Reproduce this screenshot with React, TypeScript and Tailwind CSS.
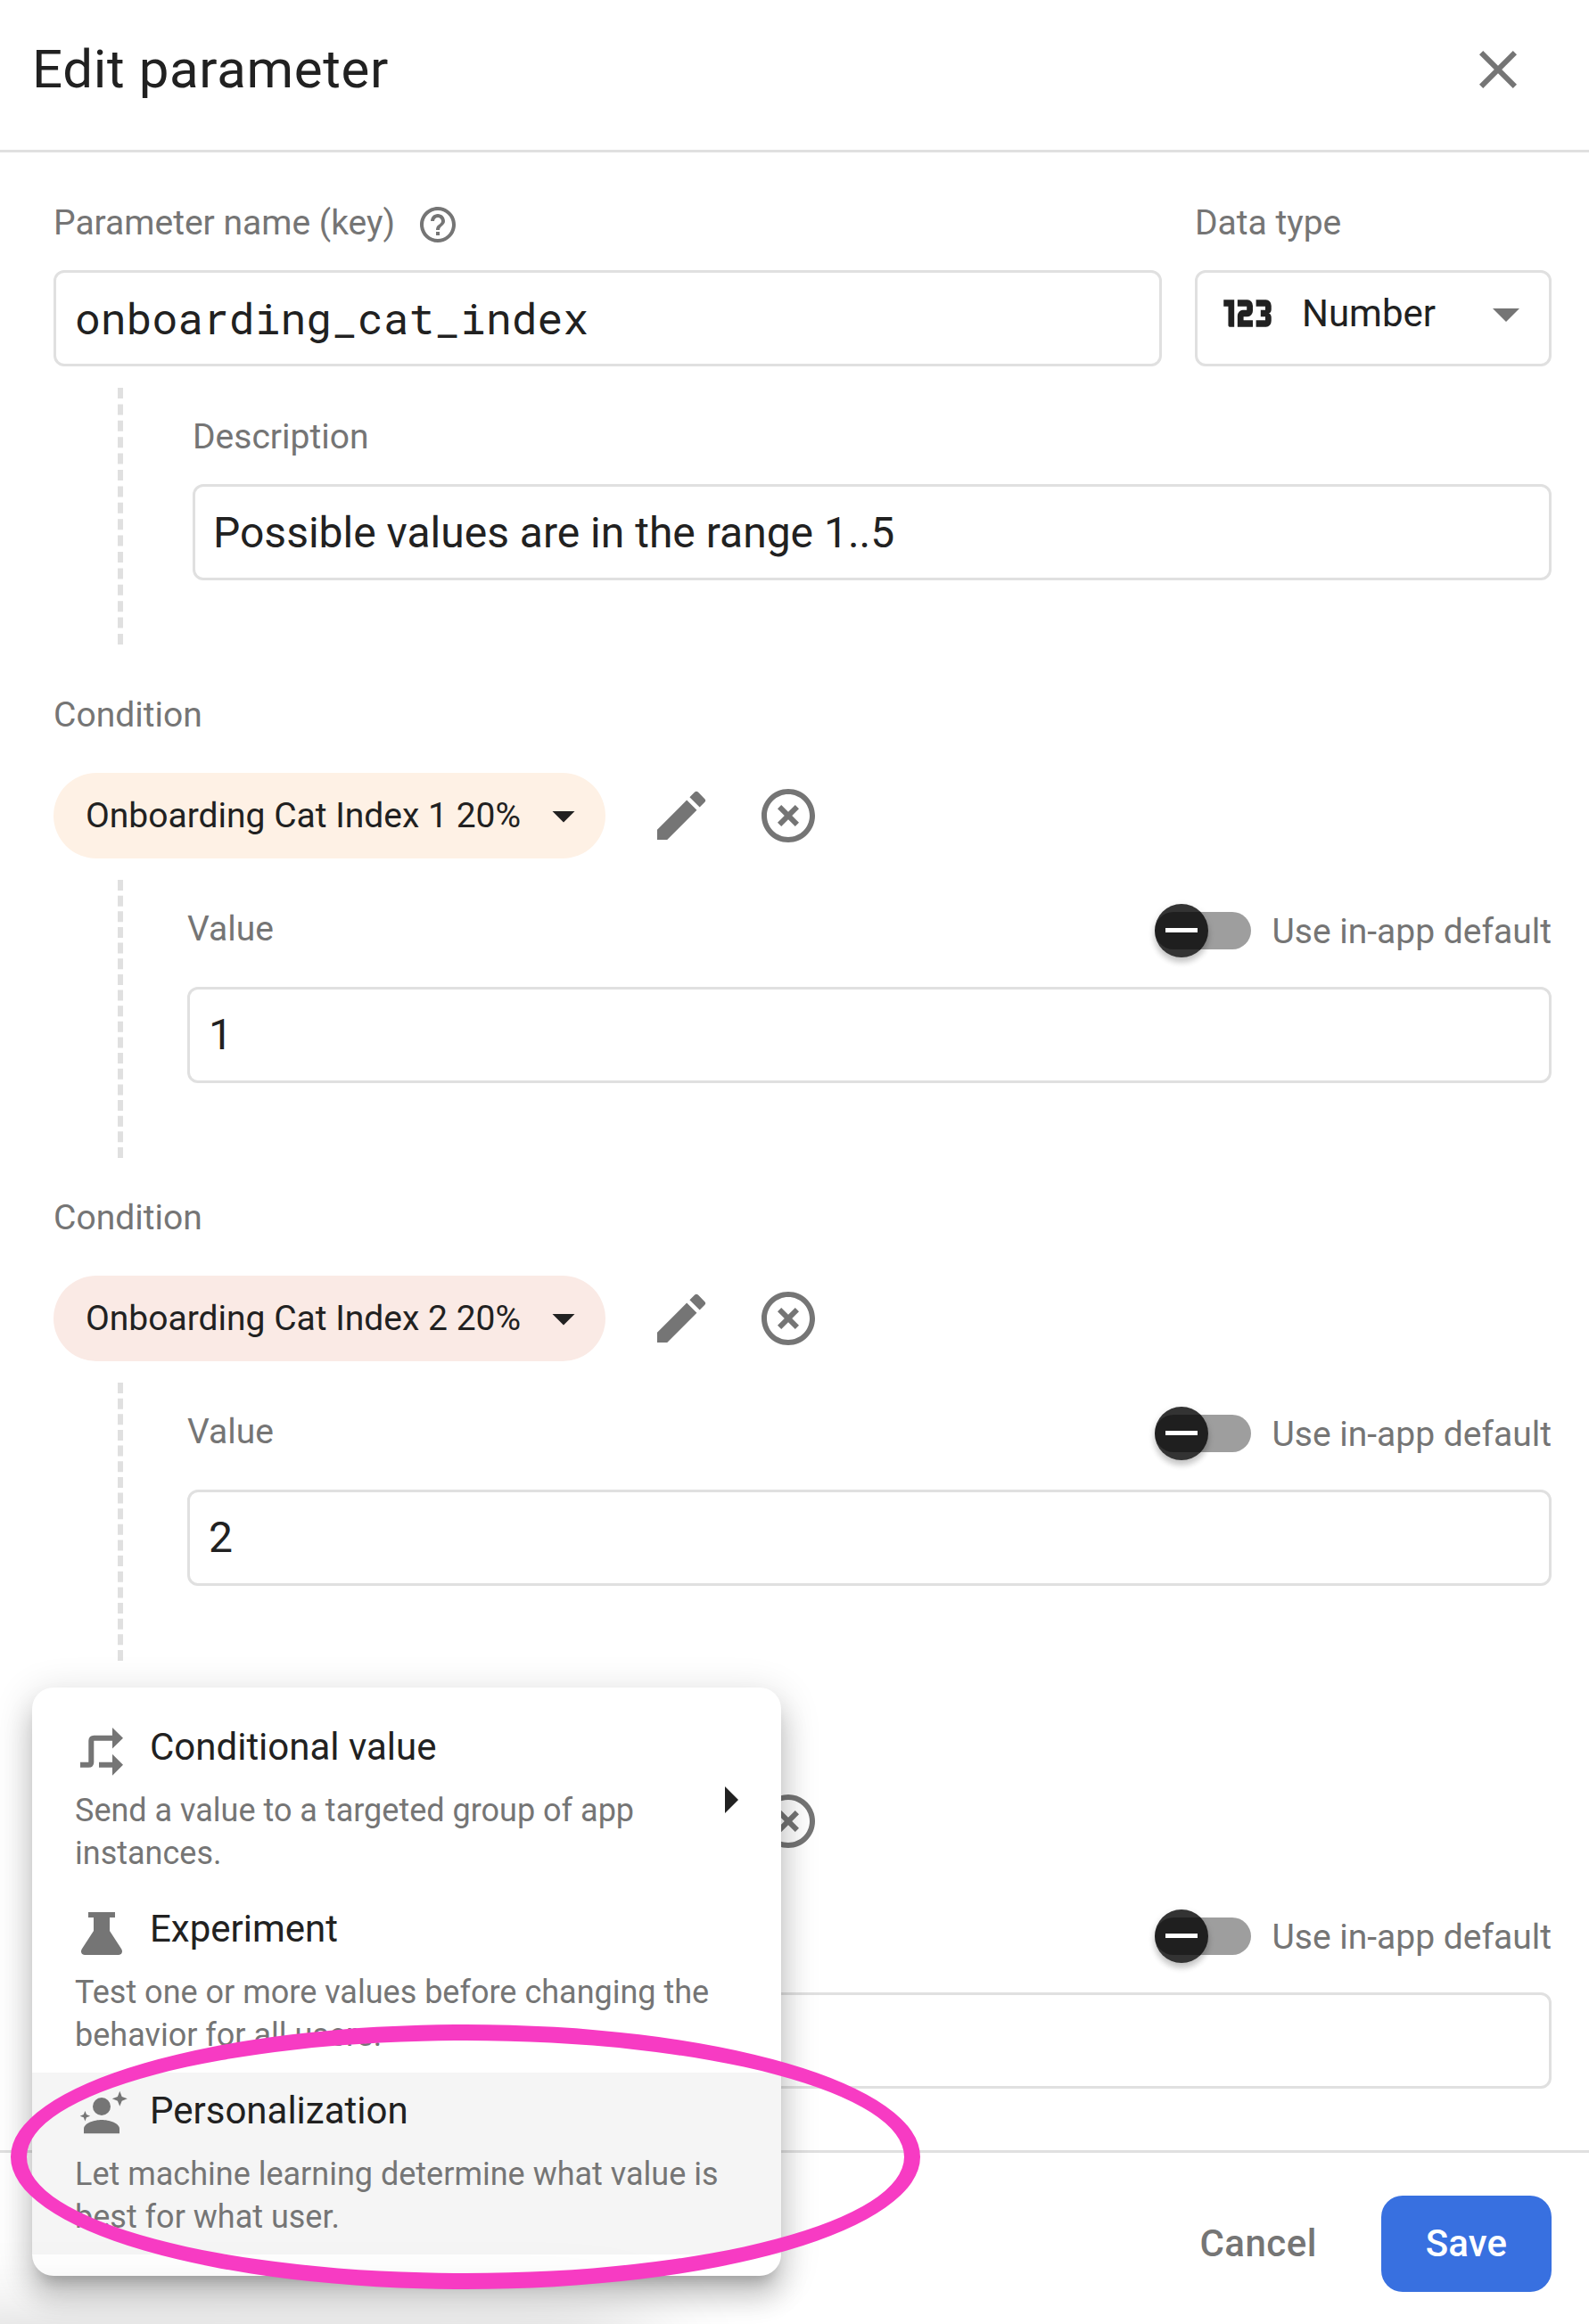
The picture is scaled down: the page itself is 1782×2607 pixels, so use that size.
import type { ReactNode } from "react";
import { MdArrowDropDown, MdArrowRight, MdClose, MdEdit, MdHelpOutline, MdHighlightOff } from "react-icons/md";

const fieldBox = "h-[108px] rounded-xl border-[3px] border-[#e0e0e0] bg-white";
const labelText = "pt-px text-[39px] leading-[60px] h-[60px] text-[#757575] whitespace-nowrap";

function NumericIcon() {
  return (
    <svg className="h-[31px] w-[54px]" viewBox="1.6 6.6 20.8 10.8" preserveAspectRatio="none" fill="#212121" stroke="#212121" strokeWidth="0.6">
      <path d="M4,17V9H2V7H6V17H4M22,15C22,16.11 21.1,17 20,17H16V15H20V13H18V11H20V9H16V7H20A2,2 0 0,1 22,9V10.5A1.5,1.5 0 0,1 20.5,12A1.5,1.5 0 0,1 22,13.5V15M14,15V17H8V13C8,11.89 8.9,11 10,11H12V9H8V7H12A2,2 0 0,1 14,9V11C14,12.11 13.1,13 12,13H10V15H14Z" />
    </svg>
  );
}

function BranchIcon() {
  return (
    <svg className="size-[60px] shrink-0" viewBox="0 0 60 60" fill="#757575">
      <path d="M6 44.7H15.3Q18.3 44.7 18.3 41.7V17.7Q18.3 14.7 21.3 14.7H43" fill="none" stroke="#757575" strokeWidth="6" />
      <path d="M42 3L54 14.7L42 26.4ZM27 41.7H42V32.7L54 44.7L42 56.7V47.7H27Z" />
    </svg>
  );
}

function FlaskIcon() {
  return (
    <svg className="size-[60px] shrink-0" viewBox="0 0 60 60" fill="#757575">
      <path d="M15 6H45V12H39V27L52.3 47.6C54 50.6 52.6 54 49 54H11C7.4 54 6 50.6 7.7 47.6L21 27V12H15Z" />
    </svg>
  );
}

function PersonSparkleIcon() {
  return (
    <svg className="size-[60px] shrink-0" viewBox="0 0 60 60" fill="#757575">
      <circle cx="30" cy="20" r="10" />
      <path d="M10 50.3V45C10 38.5 22 35 30 35S50 38.5 50 45V50.3Z" />
      <path d="M50.3 2.8L52.7 8.9L58.8 11.3L52.7 13.7L50.3 19.8L47.9 13.7L41.8 11.3L47.9 8.9Z" />
      <path d="M11.4 25L13 29.1L17.1 30.7L13 32.3L11.4 36.4L9.8 32.3L5.7 30.7L9.8 29.1Z" />
    </svg>
  );
}

function Toggle() {
  return (
    <div className="relative flex h-[60px] w-[108px] items-center">
      <div className="absolute left-0 top-0 size-[60px] rounded-full bg-[#333333] shadow-[0_6px_6px_rgba(0,0,0,0.14),0_3px_9px_rgba(0,0,0,0.14)]" />
      <div className="relative h-[42px] w-full rounded-full bg-black/38" />
      <div className="absolute left-3 top-[27px] h-[5px] w-9 bg-white" />
    </div>
  );
}

function Condition({ name, value, chip, covered }: { name?: string; value?: string; chip: string; covered?: boolean }) {
  return (
    <section className="mb-9">
      <div className={labelText}>{!covered && "Condition"}</div>
      <div className="mt-9 flex h-24 items-center">
        <div className={`flex h-24 w-[619px] items-center justify-between rounded-full pl-9 pr-[17px] ${chip}`}>
          <span className="whitespace-nowrap text-[39px] text-[#212121]">{name}</span>
          <MdArrowDropDown className="size-[60px] text-[#212121]" />
        </div>
        <MdEdit className="ml-[49px] size-[72px] text-[#757575]" />
        <MdHighlightOff className="ml-12 size-[72px] text-[#757575]" />
      </div>
      <div className="ml-[72px] mt-6 h-[312px] border-l-[6px] border-dashed border-[#e0e0e0] pl-[72px] pt-6">
        <div className="flex h-[60px] items-start justify-between">
          <span className={labelText}>{!covered && "Value"}</span>
          <div className="mt-[3px] flex items-center gap-6">
            <Toggle />
            <span className={labelText}>Use in-app default</span>
          </div>
        </div>
        <div className={`${fieldBox} mt-9 flex items-center pl-[21px] text-[48px] text-[#212121]`}>{value}</div>
      </div>
    </section>
  );
}

function MenuItem({ icon, title, text, active, arrow }: { icon: ReactNode; title: string; text: [string, string]; active?: boolean; arrow?: boolean }) {
  return (
    <div className={`flex h-[204px] items-center justify-between pl-12 pr-[21px] ${active ? "bg-[#f5f5f5]" : ""}`}>
      <div>
        <div className="flex h-[60px] items-start gap-6">
          {icon}
          <span className="text-[42px] leading-[50px] text-[#212121]">{title}</span>
        </div>
        <p className="mt-3 whitespace-nowrap text-[36px] leading-[48px] text-[#757575]">
          {text[0]}
          <br />
          {text[1]}
        </p>
      </div>
      {arrow && <MdArrowRight className="size-[72px] text-[#212121]" />}
    </div>
  );
}

export default function App() {
  return (
    <div className="relative flex h-[2607px] w-[1782px] flex-col overflow-hidden bg-white font-['Roboto',sans-serif]">
      <header className="flex h-[171px] shrink-0 items-center justify-between border-b-[3px] border-[#e0e0e0] pb-3 pl-9 pr-[66px]">
        <h1 className="text-[60px] leading-[78px] tracking-[0.65px] text-[#212121]">Edit parameter</h1>
        <MdClose className="size-[72px] text-[#757575]" />
      </header>

      <main className="h-[2241px] shrink-0 overflow-hidden pl-[60px] pr-[42px] pt-12">
        <div className="flex justify-between">
          <div className="w-[1243px]">
            <div className="flex items-center gap-6">
              <span className={labelText}>Parameter name (key)</span>
              <MdHelpOutline className="mt-1.5 size-12 text-[#757575]" />
            </div>
            <div className={`${fieldBox} mt-6 flex items-center pl-[21px] font-['Roboto_Mono','DejaVu_Sans_Mono',monospace] text-[48px] text-[#212121]`}>
              onboarding_cat_index
            </div>
          </div>
          <div className="w-[400px]">
            <div className={labelText}>Data type</div>
            <div className={`${fieldBox} mt-6 flex items-center pb-[11px] pl-[29px] pr-3`}>
              <NumericIcon />
              <span className="ml-[34px] text-[42px] text-[#212121]">Number</span>
              <MdArrowDropDown className="ml-auto size-[72px] text-[#757575]" />
            </div>
          </div>
        </div>

        <div className="mb-12 ml-[72px] mt-6 h-[288px] border-l-[6px] border-dashed border-[#e0e0e0] pl-[78px] pt-6">
          <div className={labelText}>Description</div>
          <div className={`${fieldBox} mt-6 flex items-center pl-5 pt-px text-[48px] text-[#212121]`}>Possible values are in the range 1..5</div>
        </div>

        <Condition name="Onboarding Cat Index 1 20%" value="1" chip="bg-[#fef1e5]" />
        <Condition name="Onboarding Cat Index 2 20%" value="2" chip="bg-[#faeae5]" />
        <Condition chip="bg-[#fef1e5]" covered />
      </main>

      <footer className="flex grow items-start justify-end border-t-[3px] border-[#e0e0e0] pr-[42px] pt-12">
        <button className="h-[108px] px-[72px] pb-0.5 text-[42px] font-medium tracking-[0.5px] text-[#757575]">Cancel</button>
        <button className="h-[108px] w-[191px] rounded-3xl bg-[#3870e0] pb-0.5 text-[42px] font-medium tracking-[0.2px] text-white">Save</button>
      </footer>

      <div className="absolute left-9 top-[1893px] h-[660px] w-[840px] rounded-3xl bg-white py-6 shadow-[0_15px_15px_-9px_rgba(0,0,0,0.2),0_24px_30px_3px_rgba(0,0,0,0.14),0_9px_42px_6px_rgba(0,0,0,0.12)]">
        <MenuItem icon={<BranchIcon />} title="Conditional value" text={["Send a value to a targeted group of app", "instances."]} arrow />
        <MenuItem icon={<FlaskIcon />} title="Experiment" text={["Test one or more values before changing the", "behavior for all users."]} />
        <MenuItem icon={<PersonSparkleIcon />} title="Personalization" text={["Let machine learning determine what value is", "best for what user."]} active />
      </div>

      {/* Soft shadow cast upward by the panel below the fold */}
      <div className="absolute -left-[90px] top-[2640px] h-[300px] w-[805px] shadow-[0_0_120px_rgba(0,0,0,0.33)]" />

      <div className="absolute left-3 top-[2271px] h-[297px] w-[1020px] rounded-[50%] border-[18px] border-[#f73bc3]" />
    </div>
  );
}
